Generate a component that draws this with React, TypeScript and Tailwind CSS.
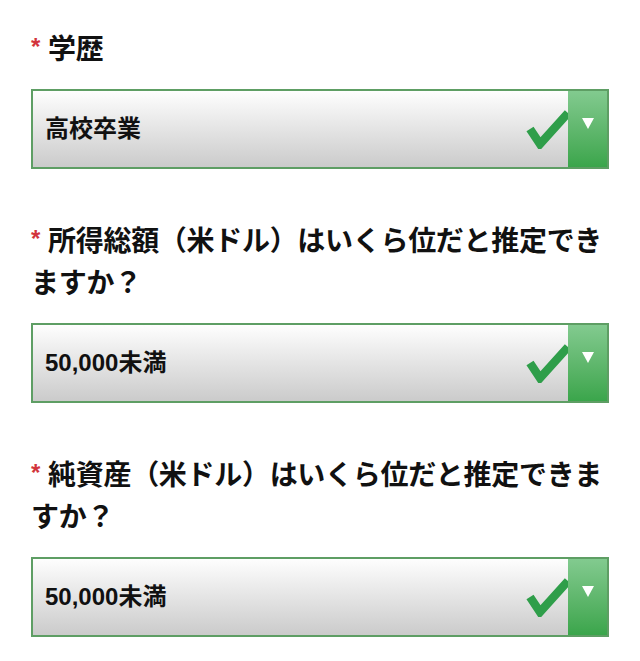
type Field = {
  lines: string[];
  value: string;
};

const fields: Field[] = [
  { lines: ["学歴"], value: "高校卒業" },
  {
    lines: ["所得総額（米ドル）はいくら位だと推定でき", "ますか？"],
    value: "50,000未満",
  },
  {
    lines: ["純資産（米ドル）はいくら位だと推定できま", "すか？"],
    value: "50,000未満",
  },
];

const CheckMark = () => (
  <svg width="44" height="40" viewBox="0 0 44 40" className="shrink-0 overflow-hidden">
    <polyline
      points="6,20 16,35 44,4"
      fill="none"
      stroke="#2f9e4a"
      strokeWidth="8.5"
      strokeLinecap="butt"
      strokeLinejoin="miter"
    />
  </svg>
);

const SelectBox = ({ value }: { value: string }) => (
  <div className="flex h-[80px] border-2 border-[#5e9e64] bg-gradient-to-b from-[#fefefe] to-[#cbcbcb]">
    <div className="flex flex-1 items-center pl-[12px] font-['Liberation_Sans','Noto_Sans_CJK_JP',sans-serif] text-[24px] font-bold text-[#111]">
      {value}
    </div>
    <div className="flex items-center">
      <CheckMark />
    </div>
    <div className="flex w-[39px] justify-center bg-gradient-to-b from-[#82ca8f] to-[#3aa54b] pt-[27px]">
      <div className="h-0 w-0 border-x-[6px] border-t-[11px] border-x-transparent border-t-white" />
    </div>
  </div>
);

export default function App() {
  return (
    <div className="min-h-[661px] bg-white px-[31px] pt-[26px] font-['Noto_Sans_CJK_JP',sans-serif]">
      {fields.map((field, i) => (
        <div key={i} className={i < fields.length - 1 ? "mb-[49px]" : ""}>
          <div className="mb-[21px] whitespace-nowrap text-[28px] leading-[42px] font-bold tracking-[-0.3px] text-[#111]">
            {field.lines.map((line, j) => (
              <div key={j} className="h-[42px]">
                {j === 0 && (
                  <span className="relative -top-[4px] mr-[8px] font-['Liberation_Sans',sans-serif] text-[24px] leading-none text-[#d2343c]">
                    *
                  </span>
                )}
                {line}
              </div>
            ))}
          </div>
          <SelectBox value={field.value} />
        </div>
      ))}
    </div>
  );
}
